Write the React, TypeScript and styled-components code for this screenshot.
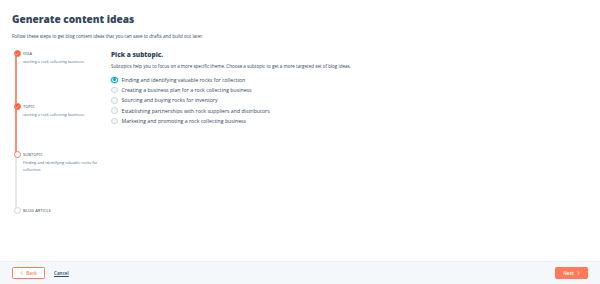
import React, { useState } from 'react';
import styled, { createGlobalStyle } from 'styled-components';

const GlobalStyle = createGlobalStyle`
  html, body {
    margin: 0;
    padding: 0;
    background: #ffffff;
    font-family: "Open Sans", "Noto Sans", sans-serif;
    color: #33475b;
  }
  * { box-sizing: border-box; }
`;

const Page = styled.div`
  width: 600px;
  height: 284px;
  display: flex;
  flex-direction: column;
`;

const Main = styled.div`
  flex: 1;
  padding: 11px 12px 0 12px;
`;

const Title = styled.h1`
  margin: 0;
  font-family: "Open Sans", sans-serif;
  font-size: 10.1px;
  font-weight: 800;
  line-height: 16px;
  color: #33475b;
`;

const Subtitle = styled.p`
  margin: 6px 0 0 0;
  font-size: 4.55px;
  line-height: 7px;
  color: #33475b;
`;

const Body = styled.div`
  display: flex;
  margin-top: 10px;
`;

const Steps = styled.div`
  width: 99px;
  display: flex;
  flex-direction: column;
`;

const Step = styled.div<{ $height: number }>`
  position: relative;
  display: flex;
  height: ${(p) => p.$height}px;
`;

const Rail = styled.div`
  width: 10px;
  position: relative;
  display: flex;
  justify-content: center;
`;

const Line = styled.div<{ $done: boolean }>`
  position: absolute;
  top: 6px;
  bottom: -2px;
  left: 3px;
  width: 1.5px;
  background: ${(p) => (p.$done ? '#ff8f73' : '#e5e9ee')};
`;

const Dot = styled.div<{ $state: 'done' | 'active' | 'todo' }>`
  position: relative;
  z-index: 1;
  width: 7px;
  height: 7px;
  border-radius: 50%;
  display: flex;
  align-items: center;
  justify-content: center;
  background: ${(p) => (p.$state === 'done' ? '#ff5c35' : '#ffffff')};
  border: 1px solid ${(p) => (p.$state === 'todo' ? '#cbd6e2' : '#ff7a59')};
`;

const StepText = styled.div`
  padding-left: 1px;
  display: flex;
  flex-direction: column;
`;

const StepLabel = styled.div`
  font-size: 4px;
  line-height: 7px;
  text-transform: uppercase;
  color: #33475b;
  letter-spacing: 0.1px;
`;

const StepValue = styled.div`
  font-size: 3.9px;
  line-height: 7.5px;
  color: #516f90;
  margin-top: 0.5px;
  max-width: 78px;
`;

const Panel = styled.div`
  flex: 1;
  display: flex;
  flex-direction: column;
`;

const PanelTitle = styled.h2`
  margin: 0;
  font-family: "Open Sans", sans-serif;
  font-size: 6.5px;
  line-height: 10px;
  font-weight: 800;
  color: #33475b;
`;

const PanelDesc = styled.p`
  margin: 3px 0 0 0;
  font-size: 4.55px;
  line-height: 7px;
  color: #33475b;
`;

const Options = styled.div`
  margin-top: 6px;
  display: flex;
  flex-direction: column;
  gap: 2.75px;
`;

const Option = styled.label`
  display: flex;
  align-items: center;
  gap: 4px;
  height: 7.5px;
  cursor: pointer;
  font-size: 5.2px;
  color: #33475b;
`;

const Radio = styled.span<{ $checked: boolean }>`
  width: 6.5px;
  height: 6.5px;
  border-radius: 50%;
  border: 0.8px solid ${(p) => (p.$checked ? '#00a4bd' : '#cbd6e2')};
  background: #f5f8fa;
  display: flex;
  align-items: center;
  justify-content: center;
  box-shadow: ${(p) => (p.$checked ? '0 0 1.5px 0.6px rgba(0,164,189,0.35)' : 'none')};
  &::after {
    content: '';
    width: 3px;
    height: 3px;
    border-radius: 50%;
    background: ${(p) => (p.$checked ? '#00a4bd' : 'transparent')};
  }
`;

const Footer = styled.div`
  height: 23px;
  background: #f5f8fa;
  border-top: 1px solid #eaf0f6;
  display: flex;
  align-items: center;
  padding: 0 12px;
`;

const ActionButton = styled.button<{ $primary?: boolean }>`
  height: 12px;
  width: 33px;
  border: 1px solid #ff7a59;
  background: ${(p) => (p.$primary ? '#ff7a59' : '#ffffff')};
  color: ${(p) => (p.$primary ? '#ffffff' : '#ff7a59')};
  font-family: inherit;
  font-size: 4.6px;
  font-weight: 600;
  display: flex;
  align-items: center;
  justify-content: center;
  gap: 3px;
  border-radius: 1.5px;
  padding: 0;
`;

const CancelLink = styled.button`
  margin-left: 9px;
  border: none;
  background: none;
  padding: 0;
  font-family: inherit;
  font-size: 4.6px;
  font-weight: 600;
  color: #33475b;
  text-decoration: underline;
`;

const Spacer = styled.div`
  flex: 1;
`;

const Check = () => (
  <svg width="4" height="4" viewBox="0 0 10 10">
    <path d="M2 5.2 L4.2 7.3 L8 2.8" fill="none" stroke="#fff" strokeWidth="1.6" strokeLinecap="round" strokeLinejoin="round" />
  </svg>
);

const Chevron = ({ dir, color }: { dir: 'left' | 'right'; color: string }) => (
  <svg width="3" height="4" viewBox="0 0 6 8">
    <path
      d={dir === 'left' ? 'M4.5 1 L1.5 4 L4.5 7' : 'M1.5 1 L4.5 4 L1.5 7'}
      fill="none"
      stroke={color}
      strokeWidth="1.2"
      strokeLinecap="round"
      strokeLinejoin="round"
    />
  </svg>
);

const steps = [
  { label: 'Idea', value: 'starting a rock collecting business', state: 'done' as const, height: 53 },
  { label: 'Topic', value: 'starting a rock collecting business', state: 'done' as const, height: 48 },
  { label: 'Subtopic', value: 'Finding and identifying valuable rocks for collection', state: 'active' as const, height: 56 },
  { label: 'Blog Article', value: '', state: 'todo' as const, height: 10 },
];

const subtopics = [
  'Finding and identifying valuable rocks for collection',
  'Creating a business plan for a rock collecting business',
  'Sourcing and buying rocks for inventory',
  'Establishing partnerships with rock suppliers and distributors',
  'Marketing and promoting a rock collecting business',
];

export default function App() {
  const [selected, setSelected] = useState(0);

  return (
    <Page>
      <GlobalStyle />
      <Main>
        <Title>Generate content ideas</Title>
        <Subtitle>Follow these steps to get blog content ideas that you can save to drafts and build out later.</Subtitle>
        <Body>
          <Steps>
            {steps.map((s, i) => (
              <Step key={s.label} $height={s.height}>
                <Rail>
                  {i < steps.length - 1 && <Line $done={s.state === 'done'} />}
                  <Dot $state={s.state}>{s.state === 'done' && <Check />}</Dot>
                </Rail>
                <StepText>
                  <StepLabel>{s.label}</StepLabel>
                  {s.value && <StepValue>{s.value}</StepValue>}
                </StepText>
              </Step>
            ))}
          </Steps>
          <Panel>
            <PanelTitle>Pick a subtopic.</PanelTitle>
            <PanelDesc>
              Subtopics help you to focus on a more specific theme. Choose a subtopic to get a more targeted set of blog ideas.
            </PanelDesc>
            <Options>
              {subtopics.map((t, i) => (
                <Option key={t} onClick={() => setSelected(i)}>
                  <Radio $checked={selected === i} />
                  {t}
                </Option>
              ))}
            </Options>
          </Panel>
        </Body>
      </Main>
      <Footer>
        <ActionButton>
          <Chevron dir="left" color="#ff7a59" />
          Back
        </ActionButton>
        <CancelLink>Cancel</CancelLink>
        <Spacer />
        <ActionButton $primary>
          Next
          <Chevron dir="right" color="#ffffff" />
        </ActionButton>
      </Footer>
    </Page>
  );
}
